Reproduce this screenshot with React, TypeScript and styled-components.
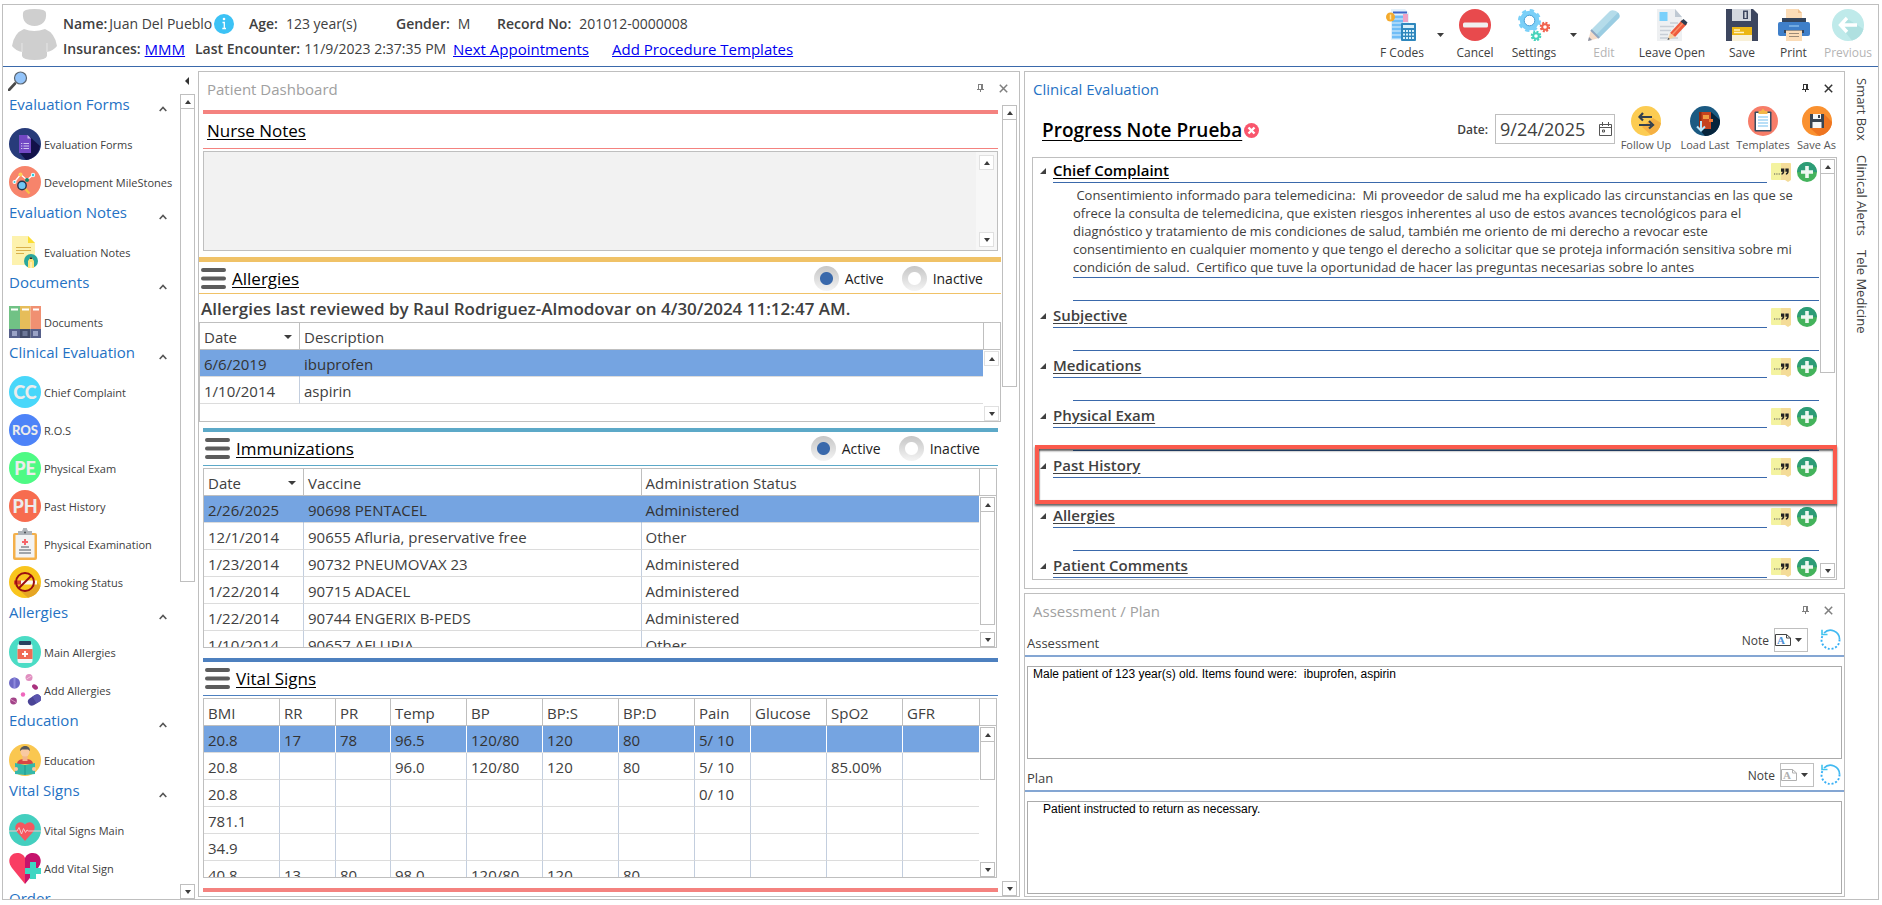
import React from 'react';
import styled, { createGlobalStyle } from 'styled-components';

const line = '#bfbfbf';
const ink = '#404040';
const navy = '#3a69ab';
const link = '#2572c4';

const GlobalStyle = createGlobalStyle`
  *, *::before, *::after { box-sizing: border-box; }
  html, body, #root { height: 100%; }
  body {
    margin: 0;
    background: #fff;
    color: ${ink};
    font-family: "Open Sans", "Noto Sans", sans-serif;
    font-size: 15px;
    line-height: 20px;
  }
  button, input, textarea { font: inherit; color: inherit; }
  button { margin: 0; padding: 0; border: 0; background: none; cursor: pointer; }
  svg { display: block; flex: none; }
`;

/* ---------- Shell ---------- */

const Shell = styled.div`
  height: 100%;
  padding: 4px 3px 5px 2px;
`;

const Frame = styled.div`
  height: 100%;
  border: 1px solid ${line};
  display: flex;
  flex-direction: column;
`;

const Header = styled.header`
  flex: none;
  display: flex;
  height: 62px;
  border-bottom: 1px solid ${navy};
`;

const Body = styled.div`
  flex: 1;
  min-height: 0;
  display: grid;
  grid-template-columns: 195px minmax(0, 822fr) minmax(0, 821fr) 33px;
`;

/* ---------- Patient header ---------- */

const Avatar = styled.svg`
  margin: 4px 6px 0 9px;
`;

const Patient = styled.div`
  flex: 1;
  min-width: 0;
  padding-top: 8px;
  font-size: 14px;
`;

const FieldRow = styled.div`
  display: flex;
  align-items: center;
  height: 22px;
  margin-bottom: 3px;
  white-space: nowrap;
`;

const Field = styled.div<{ $w?: number; $gap?: number }>`
  display: flex;
  align-items: center;
  gap: ${(p) => p.$gap ?? 4}px;
  width: ${(p) => (p.$w ? `${p.$w}px` : 'auto')};
  b { font-weight: 600; }
`;

const BlueLink = styled.a`
  color: #0000f0;
  font-size: 15px;
  text-decoration: underline;
`;

const Toolbar = styled.div`
  flex: none;
  display: flex;
  padding-right: 1px;
`;

const ToolButton = styled.button<{ $w: number }>`
  width: ${(p) => p.$w}px;
  display: flex;
  flex-direction: column;
  align-items: center;
  padding-top: 4px;
  gap: 4px;
  font-size: 12px;
  line-height: 16px;
  white-space: nowrap;
  &:disabled { color: #b4b4b4; cursor: default; }
`;

const DropArrow = styled.button<{ $w: number }>`
  width: ${(p) => p.$w}px;
  display: flex;
  justify-content: center;
  padding-top: 28px;
`;

/* ---------- Scroll bars ---------- */

const Rail = styled.div<{ $soft?: boolean }>`
  flex: 1;
  width: 15px;
  min-height: 0;
  display: flex;
  flex-direction: column;
  --edge: ${(p) => (p.$soft ? '#e0e0e0' : line)};
`;

const RailButton = styled.button`
  flex: none;
  width: 15px;
  height: 15px;
  border: 1px solid var(--edge);
  background: #fff;
  display: flex;
  align-items: center;
  justify-content: center;
`;

const Thumb = styled.div<{ $part: number }>`
  flex: ${(p) => p.$part} 0 0;
  margin-top: -1px;
  border: 1px solid var(--edge);
  background: #fff;
`;

const Track = styled.div<{ $part: number }>`
  flex: ${(p) => p.$part} 0 0;
`;

const Tri = ({ dir = 'down', w = 6, h = 4 }: { dir?: 'up' | 'down'; w?: number; h?: number }) => (
  <svg width={w} height={h} viewBox="0 0 6 4" preserveAspectRatio="none">
    <path d={dir === 'up' ? 'M0 4L3 0L6 4Z' : 'M0 0H6L3 4Z'} fill="#3c3c3c" />
  </svg>
);

function ScrollBar({ thumb = 0, soft }: { thumb?: number; soft?: boolean }) {
  return (
    <Rail $soft={soft}>
      <RailButton aria-label="Scroll up"><Tri dir="up" /></RailButton>
      {thumb > 0 && <Thumb $part={thumb} />}
      <Track $part={100 - thumb} />
      <RailButton aria-label="Scroll down"><Tri /></RailButton>
    </Rail>
  );
}

/* ---------- Sidebar ---------- */

const Sidebar = styled.nav`
  min-height: 0;
  display: flex;
  flex-direction: column;
`;

const SidebarTop = styled.div`
  flex: none;
  height: 26px;
  display: flex;
  justify-content: space-between;
  align-items: flex-start;
  padding: 4px 9px 0 5px;
`;

const CollapseButton = styled.button`
  padding-top: 6px;
`;

const SidebarBody = styled.div`
  flex: 1;
  min-height: 0;
  display: flex;
`;

const SidebarList = styled.div`
  flex: 1;
  min-width: 0;
  overflow: hidden;
`;

const SidebarRail = styled.div`
  display: flex;
  padding: 1px 3px 0 0;
`;

const GroupButton = styled.button`
  width: 100%;
  height: 32px;
  display: flex;
  justify-content: space-between;
  align-items: flex-start;
  padding: 1px 13px 0 6px;
  color: ${link};
  svg { margin-top: 12px; }
`;

const NavItem = styled.a`
  height: 38px;
  display: flex;
  align-items: center;
  gap: 3px;
  padding-left: 6px;
  color: ${ink};
  font-size: 11px;
  line-height: 16px;
  text-decoration: none;
  white-space: nowrap;
`;

const NavText = styled.span`
  padding-top: 2px;
`;

const Badge = styled.span<{ $bg: string; $small?: boolean }>`
  flex: none;
  width: 32px;
  height: 32px;
  border-radius: 50%;
  background: ${(p) => p.$bg};
  color: #ececec;
  display: flex;
  align-items: center;
  justify-content: center;
  font: 900 ${(p) => (p.$small ? 13 : 18)}px Lato, sans-serif;
`;

/* ---------- Panels ---------- */

const Panel = styled.section`
  min-width: 0;
  min-height: 0;
  border: 1px solid ${line};
  display: flex;
  flex-direction: column;
`;

const DashboardPanel = styled(Panel)`
  margin: 4px 2px 2px 0;
`;

const RightColumn = styled.div`
  min-height: 0;
  display: grid;
  grid-template-rows: minmax(0, 1fr) 304px;
  gap: 4px;
  padding: 4px 0 2px 2px;
`;

const PanelTitle = styled.div<{ $active?: boolean }>`
  flex: none;
  height: 33px;
  display: flex;
  padding: 7px 11px 0 8px;
  color: ${(p) => (p.$active ? link : '#a0a0a0')};
  h2 { flex: 1; margin: 0; font-size: 15px; font-weight: 400; line-height: 20px; }
`;

const PanelTool = styled.button<{ $active?: boolean }>`
  width: 24px;
  height: 18px;
  display: flex;
  align-items: center;
  justify-content: flex-end;
  color: ${(p) => (p.$active ? '#333' : '#7f7f7f')};
`;

function TitleBar({ children, active }: { children: React.ReactNode; active?: boolean }) {
  return (
    <PanelTitle $active={active}>
      <h2>{children}</h2>
      <PanelTool $active={active} aria-label="Pin">
        <svg width="7" height="8" viewBox="0 0 7 8"><path d="M1.500 0V5M0 5.500H7M3.500 5V8" stroke="currentColor" fill="none" /><path d="M1 0.500H5.500M4.500 0V5" stroke="currentColor" /><path d="M4 0H6V5H4Z" fill="currentColor" /></svg>
      </PanelTool>
      <PanelTool $active={active} aria-label="Close">
        <svg width="9" height="9" viewBox="0 0 9 9"><path d="M0.800 0.800L8.200 8.200M8.200 0.800L0.800 8.200" stroke="currentColor" strokeWidth="1.500" /></svg>
      </PanelTool>
    </PanelTitle>
  );
}

const DashBody = styled.div`
  flex: 1;
  min-height: 0;
  display: flex;
`;

const DashContent = styled.div`
  flex: 1;
  min-width: 0;
  overflow: hidden;
  padding-top: 5px;
`;

const DashRail = styled.div`
  width: 18px;
  display: flex;
  padding: 0 2px 0 1px;
`;

const Card = styled.div<{ $color: string; $wide?: boolean; $after: number }>`
  margin: 0 ${(p) => (p.$wide ? 0 : 3)}px ${(p) => p.$after}px ${(p) => (p.$wide ? 0 : 4)}px;
  border-top: ${(p) => (p.$wide ? 5 : 4)}px solid ${(p) => p.$color};
`;

const CardHead = styled.div<{ $color: string; $h: number; $plain?: boolean; $low?: boolean }>`
  height: ${(p) => p.$h}px;
  display: flex;
  align-items: center;
  gap: 6px;
  padding: ${(p) => (p.$low ? 2 : 0)}px 18px 0 ${(p) => (p.$plain ? 4 : 2)}px;
  border-bottom: 1px solid ${(p) => p.$color};
`;

const CardLink = styled.a`
  flex: 1;
  color: #000;
  font-size: 17px;
  line-height: 24px;
  text-decoration: underline;
  text-underline-offset: 2px;
`;

const Burger = () => (
  <svg width="25" height="21" viewBox="0 0 25 21"><path d="M2 2H23M2 10.500H23M2 19H23" stroke="#5c5c5c" strokeWidth="4" strokeLinecap="round" /></svg>
);

const RadioLabel = styled.label`
  display: flex;
  align-items: center;
  gap: 6px;
  margin-left: 12px;
  color: #1c1c1c;
  font-size: 14px;
`;

const Radio = styled.input`
  appearance: none;
  width: 25px;
  height: 25px;
  margin: 0;
  border-radius: 50%;
  background: radial-gradient(circle, #fff 0 6px, transparent 7px), linear-gradient(#c6c6c6, #f4f4f4);
  &:checked {
    background: radial-gradient(circle, ${navy} 0 6px, transparent 7px), linear-gradient(#c6c6c6, #f4f4f4);
  }
`;

function ActiveSwitch({ name }: { name: string }) {
  return (
    <>
      <RadioLabel><Radio type="radio" name={name} defaultChecked />Active</RadioLabel>
      <RadioLabel><Radio type="radio" name={name} />Inactive</RadioLabel>
    </>
  );
}

const NotesBox = styled.div`
  margin-top: 2px;
  height: 100px;
  border: 1px solid ${line};
  background: #f2f2f2;
  display: flex;
`;

const NotesArea = styled.textarea`
  flex: 1;
  border: 0;
  padding: 4px;
  background: transparent;
  resize: none;
  outline: none;
  overflow: hidden;
`;

const NotesRail = styled.div`
  display: flex;
  padding: 3px 3px;
  background: #f7f7f7;
`;

const Reviewed = styled.p`
  margin: 0;
  height: 28px;
  padding: 2px 2px 0;
  font-size: 17px;
  font-weight: 600;
  line-height: 26px;
  white-space: nowrap;
`;

const GridBox = styled.div<{ $h: number; $top?: number; $right?: number }>`
  height: ${(p) => p.$h}px;
  margin-top: ${(p) => p.$top ?? 0}px;
  margin-right: ${(p) => p.$right ?? 0}px;
  border: 1px solid ${line};
  display: grid;
  grid-template-columns: minmax(0, 1fr) 17px;
`;

const GridView = styled.div`
  overflow: hidden;
`;

const Gutter = styled.div`
  min-height: 0;
  display: flex;
  flex-direction: column;
  &::before {
    content: '';
    flex: none;
    height: 27px;
    border-left: 1px solid ${line};
    border-bottom: 1px solid ${line};
  }
`;

const GutterRail = styled.div`
  flex: 1;
  min-height: 0;
  display: flex;
  padding: 1px 1px 0;
`;

const DataTable = styled.table<{ $split?: boolean }>`
  width: 100%;
  table-layout: fixed;
  border-collapse: separate;
  border-spacing: 0;
  th, td {
    height: 27px;
    padding: 2px 4px 0;
    font-weight: 400;
    text-align: left;
    line-height: 20px;
    white-space: nowrap;
  }
  th { border-bottom: 1px solid ${line}; border-right: 1px solid ${line}; }
  td { border-bottom: 1px solid #dcdcdc; border-right: 1px solid #c3cede; }
  th:last-child, td:last-child { border-right: 0; }
  tr[aria-selected='true'] td {
    background: #75a4e1;
    color: #333;
    border-right-color: ${(p) => (p.$split ? '#fff' : '#75a4e1')};
  }
`;

const SortHead = styled.div`
  display: flex;
  align-items: center;
  justify-content: space-between;
  padding-right: 3px;
`;

type GridProps = {
  label: string;
  heads: string[];
  widths: (number | undefined)[];
  rows: string[][];
  height: number;
  top?: number;
  right?: number;
  sorted?: boolean;
  thumb?: number;
};

function Grid({ label, heads, widths, rows, height, top, right, sorted, thumb = 0 }: GridProps) {
  return (
    <GridBox $h={height} $top={top} $right={right}>
      <GridView>
        <DataTable aria-label={label} $split={!sorted}>
          <colgroup>{widths.map((w, i) => <col key={i} width={w} />)}</colgroup>
          <thead>
            <tr>
              {heads.map((h, i) => (
                <th key={h} scope="col">
                  {sorted && i === 0 ? <SortHead>{h}<Tri w={8} h={4} /></SortHead> : h}
                </th>
              ))}
            </tr>
          </thead>
          <tbody>
            {rows.map((r, i) => (
              <tr key={i} aria-selected={i === 0}>
                {heads.map((_, j) => <td key={j}>{r[j] ?? ''}</td>)}
              </tr>
            ))}
          </tbody>
        </DataTable>
      </GridView>
      <Gutter><GutterRail><ScrollBar thumb={thumb} soft={!thumb} /></GutterRail></Gutter>
    </GridBox>
  );
}

/* ---------- Clinical evaluation ---------- */

const NoteBar = styled.div`
  flex: none;
  height: 52px;
  display: flex;
  padding: 0 3px 0 17px;
`;

const NoteName = styled.div`
  flex: 1;
  display: flex;
  align-items: center;
  gap: 2px;
  height: 50px;
  a {
    color: #000;
    font-size: 19px;
    font-weight: 600;
    text-underline-offset: 3px;
    white-space: nowrap;
  }
`;

const DateLabel = styled.label`
  height: 50px;
  display: flex;
  align-items: center;
  font-size: 12px;
  font-weight: 600;
  margin-right: 7px;
`;

const DateBox = styled.div`
  width: 120px;
  height: 30px;
  margin: 9px 1px 0 0;
  border: 1px solid ${line};
  display: flex;
  align-items: center;
  padding-right: 2px;
`;

const DateInput = styled.input`
  flex: 1;
  min-width: 0;
  border: 0;
  outline: none;
  padding: 0 4px;
  font-size: 18px;
`;

const NoteAction = styled.button<{ $w: number }>`
  width: ${(p) => p.$w}px;
  display: flex;
  flex-direction: column;
  align-items: center;
  padding-top: 1px;
  font-size: 11px;
  line-height: 18px;
  color: #555;
  white-space: nowrap;
`;

const Outline = styled.div`
  position: relative;
  flex: 1;
  min-height: 0;
  margin: 0 7px 8px;
  border: 1px solid ${line};
  display: flex;
`;

const OutlineList = styled.div`
  flex: 1;
  min-width: 0;
  overflow: hidden;
`;

const OutlineRail = styled.div`
  display: flex;
  padding: 1px;
`;

const Topic = styled.div`
  padding: 0 0 2px 7px;
`;

const TopicHead = styled.div`
  height: 25px;
  display: flex;
  align-items: flex-start;
`;

const TopicToggle = styled.button<{ $current?: boolean }>`
  flex: 1;
  height: 25px;
  display: flex;
  align-items: center;
  gap: 7px;
  span {
    flex: 1;
    height: 25px;
    border-bottom: 1px solid ${navy};
    text-align: left;
    font-size: 15px;
    line-height: 24px;
    font-weight: 600;
    color: ${(p) => (p.$current ? '#000' : ink)};
    text-decoration: underline;
    text-underline-offset: 2px;
  }
`;

const TopicTools = styled.div`
  display: flex;
  gap: 6px;
  padding: 4px 2px 0 4px;
`;

const TopicText = styled.p`
  margin: 0 0 0 33px;
  padding: 3px 0 0;
  height: 95px;
  border-bottom: 1px solid ${navy};
  font-size: 13px;
  line-height: 18px;
  white-space: pre-wrap;
`;

const TopicSlot = styled.div`
  margin-left: 33px;
  height: 23px;
  border-bottom: 1px solid ${navy};
`;

const Highlight = styled.div`
  position: absolute;
  left: 2px;
  right: -1px;
  top: 287px;
  height: 59px;
  border: 4px solid #fb5a4c;
  box-shadow: 0 2px 2px rgba(0, 0, 0, 0.6), inset 0 2px 2px rgba(0, 0, 0, 0.6), inset 1px 0 1px rgba(0, 0, 0, 0.2);
  pointer-events: none;
`;

/* ---------- Assessment / plan ---------- */

const EntryHead = styled.div`
  flex: none;
  height: 30px;
  display: flex;
  align-items: flex-start;
  border-bottom: 2px solid #84a6d3;
  padding: 1px 3px 0 2px;
  font-size: 13px;
`;

const EntryLabel = styled.label`
  flex: 1;
  padding-top: 5px;
`;

const NoteCaption = styled.span`
  padding: 3px 5px 0 0;
  font-size: 12px;
`;

const NotePicker = styled.button<{ $after: number }>`
  width: 34px;
  height: 24px;
  margin-right: ${(p) => p.$after}px;
  border: 1px solid ${line};
  display: flex;
  align-items: center;
  gap: 4px;
`;

const ReloadButton = styled.button`
  padding-top: 1px;
`;

const Entry = styled.textarea`
  flex: 1;
  min-height: 0;
  margin: 9px 2px 3px;
  border: 1px solid #ababab;
  padding: 0 5px;
  font: 12px/14px "Liberation Sans", Arial, sans-serif;
  color: #000;
  resize: none;
  outline: none;
  overflow: hidden;
  &:last-child { margin-bottom: 2px; }
`;

const SideTabs = styled.div`
  display: flex;
  flex-direction: column;
  align-items: center;
  gap: 14px;
  padding-top: 11px;
`;

const SideTab = styled.button`
  writing-mode: vertical-rl;
  font-size: 13px;
  line-height: 20px;
  white-space: nowrap;
`;

/* ---------- Icons ---------- */

const FormsIcon = () => (
  <svg width="32" height="32" viewBox="0 0 32 32">
    <circle cx="16" cy="16" r="16" fill="#273b7a" />
    <path d="M21 9L31 18A16 16 0 0 1 17 32L10 24Z" fill="#121149" />
    <path d="M10 7H18.500L22 10.500V25H10Z" fill="#7248c4" />
    <path d="M18.500 7L22 10.500H18.500Z" fill="#c9b7ec" />
    <path d="M12 15.500H13.300M12 18H13.300M12 20.500H13.300M14.500 15.500H20M14.500 18H20M14.500 20.500H20" stroke="#d2c6f1" strokeWidth="1" />
  </svg>
);

const MilestoneIcon = () => (
  <svg width="32" height="32" viewBox="0 0 32 32">
    <circle cx="16" cy="16" r="16" fill="#f7846b" />
    <path d="M5.500 16L11.500 8.500L18 14L24 9" stroke="#fff" strokeWidth="1.300" fill="none" />
    <circle cx="5.500" cy="16" r="2" fill="#fff" /><circle cx="5.500" cy="16" r="1" fill="#3cc7d8" />
    <circle cx="11.500" cy="8.500" r="2" fill="#fbd35b" /><circle cx="18" cy="14" r="2" fill="#12876f" />
    <circle cx="24" cy="9" r="2.200" fill="#e7fbff" /><circle cx="24" cy="9" r="1.200" fill="#2fc9dc" />
    <path d="M15.500 22L20.500 27.500" stroke="#f6c445" strokeWidth="2.200" />
    <circle cx="13" cy="19.500" r="4.200" fill="#6fc6f4" stroke="#22344e" strokeWidth="1.400" />
  </svg>
);

const NotesIcon = () => (
  <svg width="32" height="32" viewBox="0 0 32 32">
    <path d="M3 0H19L26 7V29H3Z" fill="#fdf2ae" />
    <path d="M19 0L26 7H19Z" fill="#fbdd33" />
    <path d="M7 11.500H22M7 14.500H22M7 17.500H15" stroke="#d9b04b" strokeWidth="1.200" />
    <circle cx="22" cy="25" r="7" fill="#2aa79d" />
    <path d="M19 32V25L22 20.500L25 25V32Z" fill="#ffe37a" /><path d="M20.500 23L22 20.500L23.500 23Z" fill="#252525" />
    <path d="M21.300 26H22.700V32H21.300Z" fill="#fff6c8" />
  </svg>
);

const BindersIcon = () => (
  <svg width="32" height="32" viewBox="0 0 32 32">
    <path d="M0 0H11V23H0Z" fill="#71c285" /><path d="M11 0H21.500V23H11Z" fill="#e6bd5a" /><path d="M21.500 0H32V23H21.500Z" fill="#f09072" />
    <path d="M0 23H11V32H0ZM21.500 23H32V32H21.500Z" fill="#56608a" /><path d="M11 23H21.500V32H11Z" fill="#424c69" />
    <path d="M2 3.500H9M13 3.500H20M24 3.500H30" stroke="#fff" strokeWidth="2" />
    <path d="M3 25H8V30H3ZM24 25H29V30H24Z" fill="#9aa3c6" /><path d="M13.500 25H18.500V30H13.500Z" fill="#6d7898" />
  </svg>
);

const ClipboardIcon = () => (
  <svg width="32" height="32" viewBox="0 0 32 32">
    <rect x="4" y="5" width="24" height="27" rx="2" fill="#f4b04b" />
    <rect x="6.500" y="7" width="19" height="22.500" fill="#f3f3f3" />
    <path d="M9 3H13L14 1A2 2 0 0 1 18 1L19 3H23V7H9Z" fill="#aeb3b8" /><circle cx="16" cy="4.500" r="1" fill="#4b5055" />
    <path d="M16 11V17M13 14H19" stroke="#f5656a" strokeWidth="2" />
    <path d="M12 19H20M10 22H22M10 25H22" stroke="#4e5863" strokeWidth="1.200" />
  </svg>
);

const SmokingIcon = () => (
  <svg width="32" height="32" viewBox="0 0 32 32">
    <circle cx="16" cy="16" r="16" fill="#f9c51d" />
    <path d="M23 24L28 16L31.500 20A16 16 0 0 1 19 31.700L10 24Z" fill="#e5a524" />
    <path d="M12 14.500H28V18.500H12Z" fill="#fdf6ef" /><path d="M5 14.500H12V18.500H5Z" fill="#d8432a" />
    <circle cx="16" cy="16" r="9" fill="none" stroke="#9a0d10" strokeWidth="2" />
    <path d="M22.500 9.500L9.500 22.500" stroke="#9a0d10" strokeWidth="2" />
  </svg>
);

const BottleIcon = () => (
  <svg width="32" height="32" viewBox="0 0 32 32">
    <circle cx="16" cy="16" r="16" fill="#4bdcc5" />
    <rect x="8.500" y="8" width="15" height="19" rx="2" fill="#f4f8f8" /><rect x="10" y="5" width="12" height="4" rx="1" fill="#27405d" />
    <path d="M8.500 13H23.500V23H8.500Z" fill="#f06a55" /><path d="M16 15V21M13 18H19" stroke="#fff" strokeWidth="1.800" />
  </svg>
);

const PillsIcon = () => (
  <svg width="32" height="32" viewBox="0 0 32 32">
    <circle cx="5.500" cy="9" r="5.500" fill="#6d69c6" /><path d="M4.500 3.600H6.500V14.400H4.500Z" fill="#8f8bdd" />
    <circle cx="20" cy="3.500" r="3.500" fill="#e08fc0" /><path d="M17.500 5L22.500 2" stroke="#f4c6df" />
    <ellipse cx="26" cy="13" rx="3.300" ry="2.200" transform="rotate(40 26 13)" fill="#a9327e" />
    <circle cx="14" cy="20.500" r="2.200" fill="#ef67bd" /><circle cx="4.500" cy="27" r="3.400" fill="#a24388" /><path d="M2 25.500L7 28.500" stroke="#d590be" />
    <g transform="rotate(-32 25.500 26)"><rect x="18.500" y="22" width="14" height="8" rx="4" fill="#4a4496" /><path d="M25.500 22H28.500A4 4 0 0 1 28.500 30H25.500Z" fill="#5b55ae" /></g>
  </svg>
);

const EducationIcon = () => (
  <svg width="32" height="32" viewBox="0 0 32 32">
    <circle cx="16" cy="16" r="16" fill="#fac750" />
    <path d="M8 20C8 16 12 15 16 15S24 16 24 20Z" fill="#d64545" /><path d="M13.500 11H18.500V17H13.500Z" fill="#f2b48c" />
    <circle cx="16" cy="8" r="4.500" fill="#f9c9a2" /><path d="M11 7C11 1 21 0 21 7L19 5.500H13Z" fill="#57585a" />
    <path d="M6 19L16 21L26 19V30L16 31L6 30Z" fill="#35b8a9" /><path d="M16 21V31" stroke="#1f958a" /><circle cx="7" cy="25" r="2" fill="#f9c9a2" /><circle cx="25" cy="25" r="2" fill="#f9c9a2" />
  </svg>
);

const HeartPulseIcon = () => (
  <svg width="32" height="32" viewBox="0 0 32 32">
    <circle cx="16" cy="16" r="16" fill="#44cfbf" />
    <path d="M16 27L8 18C3 12 10 4.500 16 10.500C22 4.500 29 12 24 18Z" fill="#f5575f" />
    <path d="M0 17H8L10 13.500L12.500 20L14.500 14.500L16.500 18.500L18 16L19.500 17H32" stroke="#f2c9cc" fill="none" />
  </svg>
);

const HeartPlusIcon = () => (
  <svg width="32" height="32" viewBox="0 0 32 32">
    <path d="M16 32L3 16C-3 8 2 1 8 1C12 1 15 3 16 6Z" fill="#f93d63" />
    <path d="M16 32L29 16C35 8 30 1 24 1C20 1 17 3 16 6Z" fill="#c5136c" />
    <path d="M21 10H27V16H32V22H27V27H21V22H16V16H21Z" fill="#3fd6c3" />
  </svg>
);

const FCodesIcon = () => (
  <svg width="32" height="32" viewBox="0 0 32 32">
    <path d="M5 0H19L23 4V31H5Z" fill="#e3f1fb" /><path d="M7 2.500H21V4.500H7Z" fill="#3d66c7" />
    <path d="M6 8H17M6 12H17M6 16H17M6 20H17M6 24H17M6 28H17" stroke="#6fbdf7" strokeWidth="2.800" /><path d="M17 5H22V13H17Z" fill="#f0a2c4" />
    <circle cx="4.500" cy="8" r="4.500" fill="#f4aa2d" /><path d="M4.500 5.500V10.500" stroke="#fbe6a5" strokeWidth="1.500" />
    <rect x="15" y="14" width="15" height="18" rx="1" fill="#2f87bd" /><path d="M17 16H28V19H17Z" fill="#d7f0fa" />
    <path d="M17 22H28M17 25.500H28M17 29H28" stroke="#d7f0fa" strokeWidth="2" strokeDasharray="2 1" />
  </svg>
);

const CancelIcon = () => (
  <svg width="32" height="32" viewBox="0 0 32 32"><circle cx="16" cy="16" r="16" fill="#e84a4d" /><rect x="4" y="13.500" width="25" height="5" rx="1.500" fill="#f0f0f0" /></svg>
);

const SettingsIcon = () => (
  <svg width="32" height="32" viewBox="0 0 32 32" fill="none">
    <circle cx="11.500" cy="11.500" r="10" stroke="#7bd0f8" strokeWidth="3" strokeDasharray="4.200 3.650" />
    <circle cx="11.500" cy="11.500" r="7.500" stroke="#7bd0f8" strokeWidth="4.500" /><circle cx="11.500" cy="11.500" r="5.300" stroke="#4a9fd5" strokeWidth="1" />
    <circle cx="27" cy="18" r="4.300" stroke="#f0624d" strokeWidth="2" strokeDasharray="2 1.370" /><circle cx="27" cy="18" r="2.800" stroke="#f0624d" strokeWidth="2" />
    <circle cx="18" cy="27" r="4.300" stroke="#45d3bb" strokeWidth="2" strokeDasharray="2 1.370" /><circle cx="18" cy="27" r="2.800" stroke="#45d3bb" strokeWidth="2" />
  </svg>
);

const EditIcon = () => (
  <svg width="32" height="32" viewBox="0 0 32 32">
    <path d="M3 21L22 2C26 -1 34 5 31 9L11 29Z" fill="#b5dcea" /><path d="M11 29L31 9C32 8 31.500 5 30 3.500L8 26Z" fill="#9bcde2" />
    <path d="M3 21L11 29L0 32Z" fill="#f5dcc9" /><path d="M1 28L4 31L0 32Z" fill="#8b93a5" />
    <path d="M3 21L11 29" stroke="#8fa7c2" strokeWidth="2" />
  </svg>
);

const LeaveOpenIcon = () => (
  <svg width="32" height="32" viewBox="0 0 32 32">
    <path d="M1 0H19L26 8V32H1Z" fill="#eef0f2" /><path d="M19 0L26 8H19Z" fill="#bfc9d3" />
    <path d="M3.500 3H11.500V12H3.500Z" fill="#7ad0fb" />
    <path d="M14 14H22M4 17.500H18M4 21.500H15M4 25.500H12M4 29H22" stroke="#c8ced6" strokeWidth="1.400" />
    <path d="M14 24L26 11L31 15L19 28Z" fill="#ef5a3c" /><path d="M16 26L28 13" stroke="#f99168" strokeWidth="1.500" />
    <path d="M14 24L19 28L11.500 31Z" fill="#f8cf9c" /><path d="M24.500 12.500L27.500 10L31.500 13.500L29.500 16.500Z" fill="#2e3d52" /><path d="M12.200 29L14 30L11.500 31Z" fill="#2e3d52" />
  </svg>
);

const SaveIcon = () => (
  <svg width="32" height="32" viewBox="0 0 32 32">
    <path d="M0 0H27L32 5V32H0Z" fill="#3d465f" /><path d="M6 0H25V12H6Z" fill="#d4d8df" /><path d="M17 1.500H22V10H17Z" fill="#3d465f" /><path d="M18.500 3H20.500V9H18.500Z" fill="#d4d8df" />
    <path d="M6 18H26V26H6Z" fill="#ecb614" /><path d="M6 26H26V32H6Z" fill="#f8f0d8" /><path d="M8 21H14M8 23.500H18" stroke="#fff3c1" strokeWidth="1.300" />
  </svg>
);

const PrintIcon = () => (
  <svg width="32" height="32" viewBox="0 0 32 32">
    <path d="M8 0H20L24 4V13H8Z" fill="#fbdcb7" /><path d="M20 0L24 4H20Z" fill="#eebf8e" /><path d="M4 9H28V14H4Z" fill="#33445c" />
    <rect x="0" y="13" width="32" height="14" rx="2" fill="#3f7fc9" /><path d="M11 17H21" stroke="#8fc1ef" strokeWidth="1.300" />
    <path d="M6 21H26V24H6Z" fill="#33445c" /><path d="M8 21.500H24V32H8Z" fill="#fbdcb7" /><path d="M11 24.500H21M11 27.500H21" stroke="#9b8a78" />
  </svg>
);

const PreviousIcon = () => (
  <svg width="32" height="32" viewBox="0 0 32 32">
    <circle cx="16" cy="16" r="16" fill="#bfeaea" /><path d="M14 9L31.500 20A16 16 0 0 1 20 31.500L9 18Z" fill="#afe0e0" />
    <path d="M15 9L8.500 16L15 23M9 16H25" stroke="#fff" strokeWidth="3.400" fill="none" />
  </svg>
);

const FollowIcon = () => (
  <svg width="30" height="30" viewBox="0 0 30 30">
    <circle cx="15" cy="15" r="15" fill="#fccc52" /><path d="M22 12L30 17A15 15 0 0 1 20 29L11 21Z" fill="#f5b043" />
    <path d="M21 11H10M8 19H20M12 7L8.500 11L12 14.500M18 15L22 19L18 22.500" stroke="#33404f" strokeWidth="2.200" fill="none" />
  </svg>
);

const LoadIcon = () => (
  <svg width="30" height="30" viewBox="0 0 30 30">
    <circle cx="15" cy="15" r="15" fill="#1b5a82" /><path d="M21 6L30 14A15 15 0 0 1 15 30L10 24Z" fill="#06243c" />
    <path d="M9 6H21V23H9Z" fill="#c6431f" /><path d="M9 6H11.500V23H9Z" fill="#8e2b13" /><path d="M13 9H19V13H13Z" fill="#f29c43" /><path d="M19 13H23V16H19Z" fill="#f07a35" />
    <path d="M11 15V24M7 20.500L11 24.500L15 20.500" stroke="#b9e6fb" strokeWidth="2" fill="none" />
  </svg>
);

const TemplatesIcon = () => (
  <svg width="30" height="30" viewBox="0 0 30 30">
    <circle cx="15" cy="15" r="15" fill="#f77d69" /><rect x="6.500" y="5.500" width="17" height="20" rx="1" fill="#344b60" />
    <path d="M8 7H22V24H8Z" fill="#fff" /><path d="M10.500 5H13L15 2.500L17 5H19.500V8H10.500Z" fill="#f3b74a" />
    <path d="M10 11H20M10 14H20M10 17H20M10 20H20" stroke="#a3d5f5" strokeWidth="1.300" />
  </svg>
);

const SaveAsIcon = () => (
  <svg width="30" height="30" viewBox="0 0 30 30">
    <circle cx="15" cy="15" r="15" fill="#fa9130" /><path d="M22 8L30 16A15 15 0 0 1 17 30L8 22Z" fill="#ee7521" />
    <path d="M8 8H22V22H8Z" fill="#3a4552" /><path d="M11 8H19V13H11Z" fill="#f4f6f8" /><path d="M16 9H18V12H16Z" fill="#3a4552" /><path d="M10.500 16H19.500V22H10.500Z" fill="#f4f6f8" />
  </svg>
);

const QuoteIcon = () => (
  <svg width="20" height="19" viewBox="0 0 20 19">
    <rect width="20" height="17" rx="1" fill="#f4f3a0" /><path d="M10 0H19L20 1V17L17 19L14 17H10Z" fill="#f4dc98" />
    <path d="M3 11H4.200M5.300 11H6.500M7.600 11H8.800" stroke="#555" strokeWidth="1.200" />
    <path d="M10 5.500H13.300V8.500C13.300 10.500 12 11.500 10.500 11.800V10.300C11.300 10 11.600 9.500 11.600 8.700H10ZM14.400 5.500H17.700V8.500C17.700 10.500 16.400 11.500 14.900 11.800V10.300C15.700 10 16 9.500 16 8.700H14.400Z" fill="#222" />
  </svg>
);

const PlusIcon = () => (
  <svg width="20" height="20" viewBox="0 0 20 20">
    <circle cx="10" cy="10" r="10" fill="#44b35c" /><path d="M0 10A10 10 0 0 1 20 10Z" fill="#2d9c77" />
    <path d="M10 4V16M4 10H16" stroke="#eef8f1" strokeWidth="3.600" />
  </svg>
);

const SheetIcon = ({ color, rim }: { color: string; rim: string }) => (
  <svg width="16" height="12" viewBox="0 0 16 12">
    <path d="M0.500 0.500H11.500L15.500 4V11.500H0.500ZM11.500 0.500V4H15.500" fill="#fff" stroke={rim} />
    <text x="2" y="10" fontFamily="Liberation Serif, serif" fontSize="11" fontWeight="700" fill={color}>A</text>
  </svg>
);

const RefreshIcon = () => (
  <svg width="21" height="21" viewBox="0 0 21 21" fill="none" stroke="#35aef5">
    <path d="M4 4A9 9 0 0 1 19.500 10.500" stroke="#41b9f1" strokeWidth="1.700" />
    <path d="M19.500 10.500A9 9 0 1 1 3 6" strokeWidth="1.900" strokeDasharray="2 1.800" />
    <path d="M2 0.800V5.500H7.500" stroke="#41c4ee" strokeWidth="1.600" />
  </svg>
);

/* ---------- Data ---------- */

const groups: { title: string; items: [string, React.ReactNode][] }[] = [
  { title: 'Evaluation Forms', items: [['Evaluation Forms', <FormsIcon />], ['Development MileStones', <MilestoneIcon />]] },
  { title: 'Evaluation Notes', items: [['Evaluation Notes', <NotesIcon />]] },
  { title: 'Documents', items: [['Documents', <BindersIcon />]] },
  {
    title: 'Clinical Evaluation',
    items: [
      ['Chief Complaint', <Badge $bg="#48d7fa">CC</Badge>],
      ['R.O.S', <Badge $bg="#4d83f8" $small>ROS</Badge>],
      ['Physical Exam', <Badge $bg="#4efa84">PE</Badge>],
      ['Past History', <Badge $bg="#f76c4f">PH</Badge>],
      ['Physical Examination', <ClipboardIcon />],
      ['Smoking Status', <SmokingIcon />],
    ],
  },
  { title: 'Allergies', items: [['Main Allergies', <BottleIcon />], ['Add Allergies', <PillsIcon />]] },
  { title: 'Education', items: [['Education', <EducationIcon />]] },
  { title: 'Vital Signs', items: [['Vital Signs Main', <HeartPulseIcon />], ['Add Vital Sign', <HeartPlusIcon />]] },
  { title: 'Order', items: [] },
];

const immunizations = [
  ['2/26/2025', '90698 PENTACEL', 'Administered'],
  ['12/1/2014', '90655 Afluria, preservative free', 'Other'],
  ['1/23/2014', '90732 PNEUMOVAX 23', 'Administered'],
  ['1/22/2014', '90715 ADACEL', 'Administered'],
  ['1/22/2014', '90744 ENGERIX B-PEDS', 'Administered'],
  ['1/10/2014', '90657 AFLURIA', 'Other'],
];

const vitals = [
  ['20.8', '17', '78', '96.5', '120/80', '120', '80', '5/ 10'],
  ['20.8', '', '', '96.0', '120/80', '120', '80', '5/ 10', '', '85.00%'],
  ['20.8', '', '', '', '', '', '', '0/ 10'],
  ['781.1'],
  ['34.9'],
  ['40.8', '13', '80', '98.0', '120/80', '120', '80'],
];

const consent = ` Consentimiento informado para telemedicina:  Mi proveedor de salud me ha explicado las circunstancias en las que se
ofrece la consulta de telemedicina, que existen riesgos inherentes al uso de estos avances tecnológicos para el
diagnóstico y tratamiento de mis condiciones de salud, también me oriento de mi derecho a revocar este
consentimiento en cualquier momento y que tengo el derecho a solicitar que se proteja información sensitiva sobre mi
condición de salud.  Certifico que tuve la oportunidad de hacer las preguntas necesarias sobre lo antes`;

const topics = ['Chief Complaint', 'Subjective', 'Medications', 'Physical Exam', 'Past History', 'Allergies', 'Patient Comments'];

/* ---------- Page ---------- */

function EntryBlock({ id, label, value, after, color, rim }: { id: string; label: string; value: string; after: number; color: string; rim: string }) {
  return (
    <>
      <EntryHead>
        <EntryLabel htmlFor={id}>{label}</EntryLabel>
        <NoteCaption id={`${id}-note`}>Note</NoteCaption>
        <NotePicker $after={after} aria-haspopup="menu" aria-labelledby={`${id}-note`}>
          <SheetIcon color={color} rim={rim} />
          <Tri w={7} h={4} />
        </NotePicker>
        <ReloadButton aria-label={`Reload ${label}`}><RefreshIcon /></ReloadButton>
      </EntryHead>
      <Entry id={id} defaultValue={value} />
    </>
  );
}

export default function App() {
  return (
    <Shell>
      <GlobalStyle />
      <Frame>
        <Header>
          <Avatar width="45" height="52" viewBox="0 0 45 52" fill="#cfcfcf">
            <path d="M11 4Q11 0 22.500 0Q34 0 34 4C35 12 30 17 22.500 17C15 17 10 12 11 4Z" />
            <path d="M12 20Q22 24 33 20Q43 24 45 37Q41 42 35 43V47Q34 51 22.500 51Q11 51 10 47V43Q4 42 0 37Q2 24 12 20Z" />
            <path d="M10 34V43M35 34V43" stroke="#e6e6e6" />
          </Avatar>
          <Patient>
            <FieldRow>
              <Field $w={186} $gap={2}>
                <b>Name:</b><span>Juan Del Pueblo</span>
                <svg width="20" height="20" viewBox="0 0 20 20"><circle cx="10" cy="10" r="10" fill="#3cc2f5" /><circle cx="10" cy="5" r="1.300" fill="#fff" /><path d="M8.500 8.500H10.300V14.500M8.300 14.500H12" stroke="#fff" strokeWidth="1.300" fill="none" /></svg>
              </Field>
              <Field $w={147} $gap={8}><b>Age:</b><span>123 year(s)</span></Field>
              <Field $w={101} $gap={8}><b>Gender:</b><span>M</span></Field>
              <Field $gap={8}><b>Record No:</b><span>201012-0000008</span></Field>
            </FieldRow>
            <FieldRow>
              <Field $w={132}><b>Insurances:</b><BlueLink href="#insurances">MMM</BlueLink></Field>
              <Field $w={258}><b>Last Encounter:</b><span>11/9/2023 2:37:35 PM</span></Field>
              <Field $w={159}><BlueLink href="#appointments">Next Appointments</BlueLink></Field>
              <Field><BlueLink href="#templates">Add Procedure Templates</BlueLink></Field>
            </FieldRow>
          </Patient>
          <Toolbar>
            <ToolButton $w={60}><FCodesIcon />F Codes</ToolButton>
            <DropArrow $w={16} aria-label="F Codes options"><Tri w={7} h={4} /></DropArrow>
            <ToolButton $w={54}><CancelIcon />Cancel</ToolButton>
            <ToolButton $w={64}><SettingsIcon />Settings</ToolButton>
            <DropArrow $w={14} aria-label="Settings options"><Tri w={7} h={4} /></DropArrow>
            <ToolButton $w={48} disabled><EditIcon />Edit</ToolButton>
            <ToolButton $w={88}><LeaveOpenIcon />Leave Open</ToolButton>
            <ToolButton $w={52}><SaveIcon />Save</ToolButton>
            <ToolButton $w={51}><PrintIcon />Print</ToolButton>
            <ToolButton $w={58} disabled><PreviousIcon />Previous</ToolButton>
          </Toolbar>
        </Header>

        <Body>
          <Sidebar>
            <SidebarTop>
              <button aria-label="Search">
                <svg width="20" height="20" viewBox="0 0 20 20"><path d="M1 19L7 12.500" stroke="#4a4a4a" strokeWidth="2.600" strokeLinecap="round" /><circle cx="12.500" cy="7" r="6" fill="#93c4fa" stroke="#5b6570" strokeWidth="1.200" /></svg>
              </button>
              <CollapseButton aria-label="Collapse menu">
                <svg width="4" height="8" viewBox="0 0 4 8"><path d="M4 0V8L0 4Z" fill="#333" /></svg>
              </CollapseButton>
            </SidebarTop>
            <SidebarBody>
              <SidebarList>
                {groups.map((g) => (
                  <div key={g.title}>
                    <GroupButton aria-expanded="true">
                      {g.title}
                      <svg width="8" height="6" viewBox="0 0 8 6"><path d="M0.700 5L4 1.500L7.300 5" stroke="#555" strokeWidth="1.600" fill="none" /></svg>
                    </GroupButton>
                    {g.items.map(([name, icon]) => (
                      <NavItem key={name} href="#item">{icon}<NavText>{name}</NavText></NavItem>
                    ))}
                  </div>
                ))}
              </SidebarList>
              <SidebarRail><ScrollBar thumb={61} /></SidebarRail>
            </SidebarBody>
          </Sidebar>

          <DashboardPanel>
            <TitleBar>Patient Dashboard</TitleBar>
            <DashBody>
              <DashContent>
                <Card $color="#f4827f" $after={6}>
                  <CardHead $color="#f4827f" $h={35} $plain><CardLink href="#nurse-notes">Nurse Notes</CardLink></CardHead>
                  <NotesBox>
                    <NotesArea aria-label="Nurse Notes" />
                    <NotesRail><ScrollBar soft /></NotesRail>
                  </NotesBox>
                </Card>
                <Card $color="#f0c267" $wide $after={6}>
                  <CardHead $color="#f0c267" $h={32} $low><Burger /><CardLink href="#allergies">Allergies</CardLink><ActiveSwitch name="allergies" /></CardHead>
                  <Reviewed>Allergies last reviewed by Raul Rodriguez-Almodovar on 4/30/2024 11:12:47 AM.</Reviewed>
                  <Grid
                    label="Allergies" sorted height={100}
                    heads={['Date', 'Description']} widths={[100, undefined]}
                    rows={[['6/6/2019', 'ibuprofen'], ['1/10/2014', 'aspirin']]}
                  />
                </Card>
                <Card $color="#5ca9c8" $after={10}>
                  <CardHead $color="#5ca9c8" $h={34}><Burger /><CardLink href="#immunizations">Immunizations</CardLink><ActiveSwitch name="immunizations" /></CardHead>
                  <Grid
                    label="Immunizations" sorted height={180} top={2} right={1} thumb={94}
                    heads={['Date', 'Vaccine', 'Administration Status']} widths={[100, undefined, undefined]}
                    rows={immunizations}
                  />
                </Card>
                <Card $color="#4d80bf" $after={10}>
                  <CardHead $color="#4d80bf" $h={34}><Burger /><CardLink href="#vital-signs">Vital Signs</CardLink></CardHead>
                  <Grid
                    label="Vital Signs" height={180} top={2} right={1} thumb={31}
                    heads={['BMI', 'RR', 'PR', 'Temp', 'BP', 'BP:S', 'BP:D', 'Pain', 'Glucose', 'SpO2', 'GFR']}
                    widths={[76, 56, 55, 76, 76, 76, 76, 56, 76, 76, undefined]}
                    rows={vitals}
                  />
                </Card>
                <Card $color="#f4827f" $after={0} />
              </DashContent>
              <DashRail><ScrollBar thumb={35} /></DashRail>
            </DashBody>
          </DashboardPanel>

          <RightColumn>
            <Panel>
              <TitleBar active>Clinical Evaluation</TitleBar>
              <NoteBar>
                <NoteName>
                  <a href="#note">Progress Note Prueba</a>
                  <button aria-label="Remove note">
                    <svg width="15" height="15" viewBox="0 0 15 15"><circle cx="7.500" cy="7.500" r="7.500" fill="#f9566d" /><path d="M4.500 4.500L10.500 10.500M10.500 4.500L4.500 10.500" stroke="#fff" strokeWidth="2.400" /></svg>
                  </button>
                </NoteName>
                <DateLabel htmlFor="note-date">Date:</DateLabel>
                <DateBox>
                  <DateInput id="note-date" defaultValue="9/24/2025" />
                  <button aria-label="Open calendar">
                    <svg width="13" height="14" viewBox="0 0 13 14" fill="none" stroke="#555"><path d="M0.500 2.500H12.500V13.500H0.500ZM0.500 5.500H12.500M3.500 0V4M9.500 0V4" /><path d="M3.500 8H5.500V10H3.500Z" /></svg>
                  </button>
                </DateBox>
                <NoteAction $w={60}><FollowIcon />Follow Up</NoteAction>
                <NoteAction $w={58}><LoadIcon />Load Last</NoteAction>
                <NoteAction $w={58}><TemplatesIcon />Templates</NoteAction>
                <NoteAction $w={49}><SaveAsIcon />Save As</NoteAction>
              </NoteBar>
              <Outline>
                <OutlineList>
                  {topics.map((t, i) => (
                    <Topic key={t}>
                      <TopicHead>
                        <TopicToggle $current={i === 0} aria-expanded="true">
                          <svg width="6" height="6" viewBox="0 0 6 6"><path d="M6 0V6H0Z" fill="#404040" /></svg>
                          <span>{t}</span>
                        </TopicToggle>
                        <TopicTools>
                          <button aria-label={`${t} comment`}><QuoteIcon /></button>
                          <button aria-label={`Add to ${t}`}><PlusIcon /></button>
                        </TopicTools>
                      </TopicHead>
                      {i === 0 && <TopicText>{consent}</TopicText>}
                      <TopicSlot />
                    </Topic>
                  ))}
                </OutlineList>
                <OutlineRail><ScrollBar thumb={51} /></OutlineRail>
                <Highlight />
              </Outline>
            </Panel>

            <Panel>
              <TitleBar>Assessment / Plan</TitleBar>
              <EntryBlock
                id="assessment" label="Assessment" after={12} color="#4d8fd6" rim="#444"
                value="Male patient of 123 year(s) old. Items found were:  ibuprofen, aspirin"
              />
              <EntryBlock
                id="plan" label="Plan" after={6} color="#b0b0b0" rim="#b0b0b0"
                value="   Patient instructed to return as necessary."
              />
            </Panel>
          </RightColumn>

          <SideTabs>
            <SideTab>Smart Box</SideTab>
            <SideTab>Clinical Alerts</SideTab>
            <SideTab>Tele Medicine</SideTab>
          </SideTabs>
        </Body>
      </Frame>
    </Shell>
  );
}
